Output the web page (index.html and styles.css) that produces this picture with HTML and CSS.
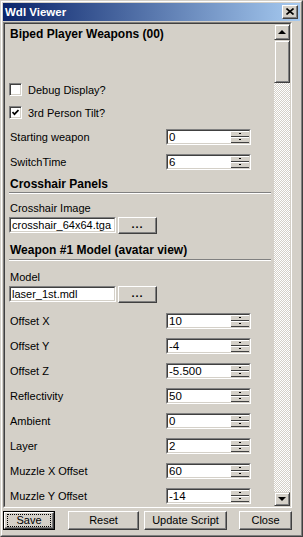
FILE: index.html
```html
<!DOCTYPE html>
<html>
<head>
<meta charset="utf-8">
<link rel="stylesheet" href="styles.css">
</head>
<body>
<div class="window">
  <div class="window-inner">
    <div class="titlebar">
      <span class="title">Wdl Viewer</span>
      <div class="close-btn">
        <svg width="8" height="7" viewBox="0 0 8 7"><path d="M0.5 0.5 L7.5 6.5 M7.5 0.5 L0.5 6.5" stroke="#000" stroke-width="1.6" fill="none"/></svg>
      </div>
    </div>
    <div class="panel">
      <div class="panel-inner">
        <div class="content">
          <div class="main-heading">Biped Player Weapons (00)</div>

          <div class="check-row first">
            <span class="checkbox"></span><span class="check-label">Debug Display?</span>
          </div>
          <div class="check-row">
            <span class="checkbox"><svg width="7" height="7" viewBox="0 0 7 7"><path d="M0.5 3 L2.5 5.2 L6.5 1" stroke="#000" stroke-width="1.7" fill="none"/></svg></span><span class="check-label">3rd Person Tilt?</span>
          </div>

          <div class="field-row"><span class="field-label">Starting weapon</span><div class="spin"><div class="spin-inner"><span class="spin-text">0</span><div class="spin-btns"><span class="spin-btn"><i class="dot"></i></span><span class="spin-btn"><i class="dot"></i></span></div></div></div></div>
          <div class="field-row"><span class="field-label">SwitchTime</span><div class="spin"><div class="spin-inner"><span class="spin-text">6</span><div class="spin-btns"><span class="spin-btn"><i class="dot"></i></span><span class="spin-btn"><i class="dot"></i></span></div></div></div></div>

          <div class="section s1">Crosshair Panels</div>
          <div class="sub-label">Crosshair Image</div>
          <div class="file-row">
            <div class="text-box"><span class="text-box-inner">crosshair_64x64.tga</span></div>
            <div class="dots-btn">...</div>
          </div>

          <div class="section s2">Weapon #1 Model (avatar view)</div>
          <div class="sub-label l2">Model</div>
          <div class="file-row">
            <div class="text-box"><span class="text-box-inner">laser_1st.mdl</span></div>
            <div class="dots-btn">...</div>
          </div>

          <div class="rows">
            <div class="field-row"><span class="field-label">Offset X</span><div class="spin"><div class="spin-inner"><span class="spin-text">10</span><div class="spin-btns"><span class="spin-btn"><i class="dot"></i></span><span class="spin-btn"><i class="dot"></i></span></div></div></div></div>
            <div class="field-row"><span class="field-label">Offset Y</span><div class="spin"><div class="spin-inner"><span class="spin-text">-4</span><div class="spin-btns"><span class="spin-btn"><i class="dot"></i></span><span class="spin-btn"><i class="dot"></i></span></div></div></div></div>
            <div class="field-row"><span class="field-label">Offset Z</span><div class="spin"><div class="spin-inner"><span class="spin-text">-5.500</span><div class="spin-btns"><span class="spin-btn"><i class="dot"></i></span><span class="spin-btn"><i class="dot"></i></span></div></div></div></div>
            <div class="field-row"><span class="field-label">Reflectivity</span><div class="spin"><div class="spin-inner"><span class="spin-text">50</span><div class="spin-btns"><span class="spin-btn"><i class="dot"></i></span><span class="spin-btn"><i class="dot"></i></span></div></div></div></div>
            <div class="field-row"><span class="field-label">Ambient</span><div class="spin"><div class="spin-inner"><span class="spin-text">0</span><div class="spin-btns"><span class="spin-btn"><i class="dot"></i></span><span class="spin-btn"><i class="dot"></i></span></div></div></div></div>
            <div class="field-row"><span class="field-label">Layer</span><div class="spin"><div class="spin-inner"><span class="spin-text">2</span><div class="spin-btns"><span class="spin-btn"><i class="dot"></i></span><span class="spin-btn"><i class="dot"></i></span></div></div></div></div>
            <div class="field-row"><span class="field-label">Muzzle X Offset</span><div class="spin"><div class="spin-inner"><span class="spin-text">60</span><div class="spin-btns"><span class="spin-btn"><i class="dot"></i></span><span class="spin-btn"><i class="dot"></i></span></div></div></div></div>
            <div class="field-row"><span class="field-label">Muzzle Y Offset</span><div class="spin"><div class="spin-inner"><span class="spin-text">-14</span><div class="spin-btns"><span class="spin-btn"><i class="dot"></i></span><span class="spin-btn"><i class="dot"></i></span></div></div></div></div>
          </div>
        </div>
        <div class="scrollbar">
          <div class="sb-btn sb-up"><i class="arrow-up"></i></div>
          <div class="sb-thumb"></div>
          <div class="sb-track"></div>
          <div class="sb-btn sb-down"><i class="arrow-down"></i></div>
        </div>
      </div>
    </div>
    <div class="button-row">
      <div class="btn btn-save"><span class="btn-face"><span class="focus">Save</span></span></div>
      <div class="btn btn-reset"><span class="btn-face">Reset</span></div>
      <div class="btn btn-update"><span class="btn-face">Update Script</span></div>
      <div class="btn btn-close"><span class="btn-face">Close</span></div>
    </div>
  </div>
</div>
</body>
</html>
```

FILE: styles.css
```css
* { box-sizing: border-box; }
html, body { margin: 0; padding: 0; }
body {
  width: 303px;
  height: 537px;
  overflow: hidden;
  background: #d4d0c8;
  font-family: "Liberation Sans", Arial, sans-serif;
  font-size: 11px;
  color: #000;
}
.window {
  width: 303px;
  height: 537px;
  background: #d4d0c8;
  border: 1px solid;
  border-color: #d4d0c8 #404040 #404040 #d4d0c8;
  display: flex;
  flex-direction: column;
}
.window-inner {
  flex: 1;
  border: 1px solid;
  border-color: #fff #808080 #808080 #fff;
  padding: 1px;
  display: flex;
  flex-direction: column;
  min-height: 0;
}
.titlebar {
  height: 18px;
  flex: none;
  background: linear-gradient(to right, #0a246a, #a6caf0);
  display: flex;
  align-items: center;
  justify-content: space-between;
  padding: 0 2px 0 2px;
  margin-bottom: 1px;
}
.title {
  color: #fff;
  font-weight: bold;
  font-size: 11.5px;
  line-height: 18px;
}
.close-btn {
  width: 16px;
  height: 14px;
  background: #d4d0c8;
  border: 1px solid;
  border-color: #fff #404040 #404040 #fff;
  box-shadow: inset -1px -1px #808080;
  display: flex;
  align-items: center;
  justify-content: center;
  padding-bottom: 1px;
  padding-right: 1px;
}
.close-btn svg { display: block; }

.panel {
  height: 486px;
  flex: none;
  margin-right: 8px;
  border: 1px solid;
  border-color: #808080 #fff #fff #808080;
}
.panel-inner {
  height: 100%;
  border: 1px solid;
  border-color: #404040 #d4d0c8 #d4d0c8 #404040;
  display: flex;
}
.content {
  flex: 1;
  overflow: hidden;
  padding-left: 5px;
}
.main-heading {
  height: 20px;
  line-height: 20px;
  font-weight: bold;
  font-size: 12px;
}
.check-row {
  height: 23px;
  display: flex;
  align-items: center;
  margin-left: -1px;
}
.check-row.first { margin-top: 34px; }
.checkbox {
  width: 13px;
  height: 13px;
  background: #fff;
  border: 1px solid;
  border-color: #808080 #fff #fff #808080;
  box-shadow: inset 1px 1px #404040, inset -1px -1px #d4d0c8;
  display: flex;
  align-items: center;
  justify-content: center;
  flex: none;
}
.checkbox svg { display: block; }
.check-label { margin-left: 6px; }

.field-row {
  height: 25px;
  display: flex;
  align-items: center;
}
.field-label {
  width: 156px;
  flex: none;
}
.spin {
  width: 85px;
  height: 16px;
  border: 1px solid;
  border-color: #808080 #fff #fff #808080;
  flex: none;
}
.spin-inner {
  height: 100%;
  display: flex;
  border: 1px solid;
  border-color: #404040 #d4d0c8 #d4d0c8 #404040;
}
.spin-text {
  flex: 1;
  background: #fff;
  padding-left: 1px;
  line-height: 12px;
  font-size: 11.5px;
}
.spin-btns {
  width: 18px;
  display: flex;
  flex-direction: column;
}
.spin-btn {
  flex: 1;
  background: #d4d0c8;
  border-top: 1px solid #fff;
  border-bottom: 1px solid #404040;
  display: flex;
  align-items: center;
  justify-content: center;
}
.dot {
  display: block;
  width: 2px;
  height: 1px;
  background: #000;
}

.section {
  font-weight: bold;
  font-size: 12px;
  margin-left: -1px;
  margin-right: 3px;
  padding-left: 1px;
  border-bottom: 1px solid #808080;
  box-shadow: 0 1px #fff;
}
.section.s1 { padding-top: 3px; line-height: 15px; }
.section.s2 { padding-top: 9px; line-height: 17px; }
.sub-label {
  padding-top: 7px;
  line-height: 16px;
}
.sub-label.l2 { padding-top: 9px; }
.file-row {
  display: flex;
  margin-top: 1px;
  margin-left: -1px;
  height: 16px;
}
.text-box {
  width: 107px;
  height: 16px;
  border: 1px solid;
  border-color: #808080 #fff #fff #808080;
}
.text-box-inner {
  display: block;
  height: 100%;
  background: #fff;
  border: 1px solid;
  border-color: #404040 #d4d0c8 #d4d0c8 #404040;
  line-height: 12px;
  padding-left: 1px;
  font-size: 11px;
  white-space: nowrap;
  overflow: hidden;
}
.dots-btn {
  width: 39px;
  height: 17px;
  margin-left: 2px;
  border: 1px solid;
  border-color: #fff #404040 #404040 #fff;
  box-shadow: inset -1px -1px #808080;
  text-align: center;
  font-weight: bold;
  line-height: 12px;
  letter-spacing: 1px;
}
.rows { margin-top: 6px; }

.scrollbar {
  width: 16px;
  flex: none;
  display: flex;
  flex-direction: column;
}
.sb-btn {
  background: #d4d0c8;
  border: 1px solid;
  border-color: #d4d0c8 #404040 #404040 #d4d0c8;
  box-shadow: inset 1px 1px #fff, inset -1px -1px #808080;
  display: flex;
  align-items: center;
  justify-content: center;
  flex: none;
}
.sb-up { height: 16px; }
.sb-down { height: 14px; }
.sb-thumb {
  height: 43px;
  flex: none;
  background: #d4d0c8;
  border: 1px solid;
  border-color: #d4d0c8 #404040 #404040 #d4d0c8;
  box-shadow: inset 1px 1px #fff, inset -1px -1px #808080;
}
.sb-track {
  flex: 1;
  background: repeating-conic-gradient(#ffffff 0 25%, #d4d0c8 0 50%) 0 0 / 2px 2px;
}
.arrow-up {
  display: block;
  width: 0;
  height: 0;
  border-left: 4px solid transparent;
  border-right: 4px solid transparent;
  border-bottom: 4px solid #000;
}
.arrow-down {
  display: block;
  width: 0;
  height: 0;
  border-left: 4px solid transparent;
  border-right: 4px solid transparent;
  border-top: 4px solid #000;
}

.button-row {
  display: flex;
  margin-top: 3px;
  height: 19px;
}
.btn {
  height: 19px;
  flex: none;
  display: flex;
}
.btn-face {
  flex: 1;
  display: flex;
  align-items: center;
  justify-content: center;
  border: 1px solid;
  border-color: #fff #404040 #404040 #fff;
  box-shadow: inset -1px -1px #808080;
  font-size: 11px;
  line-height: 13px;
}
.btn-save { width: 52px; border: 1px solid #000; }
.btn-save .btn-face { padding: 1px 2px; }
.focus {
  flex: 1;
  align-self: stretch;
  display: flex;
  align-items: center;
  justify-content: center;
  border: 1px dotted #000;
  line-height: 11px;
}
.btn-reset { width: 71px; margin-left: 13px; }
.btn-update { width: 83px; margin-left: 5px; }
.btn-close { width: 53px; margin-left: 12px; }
```
